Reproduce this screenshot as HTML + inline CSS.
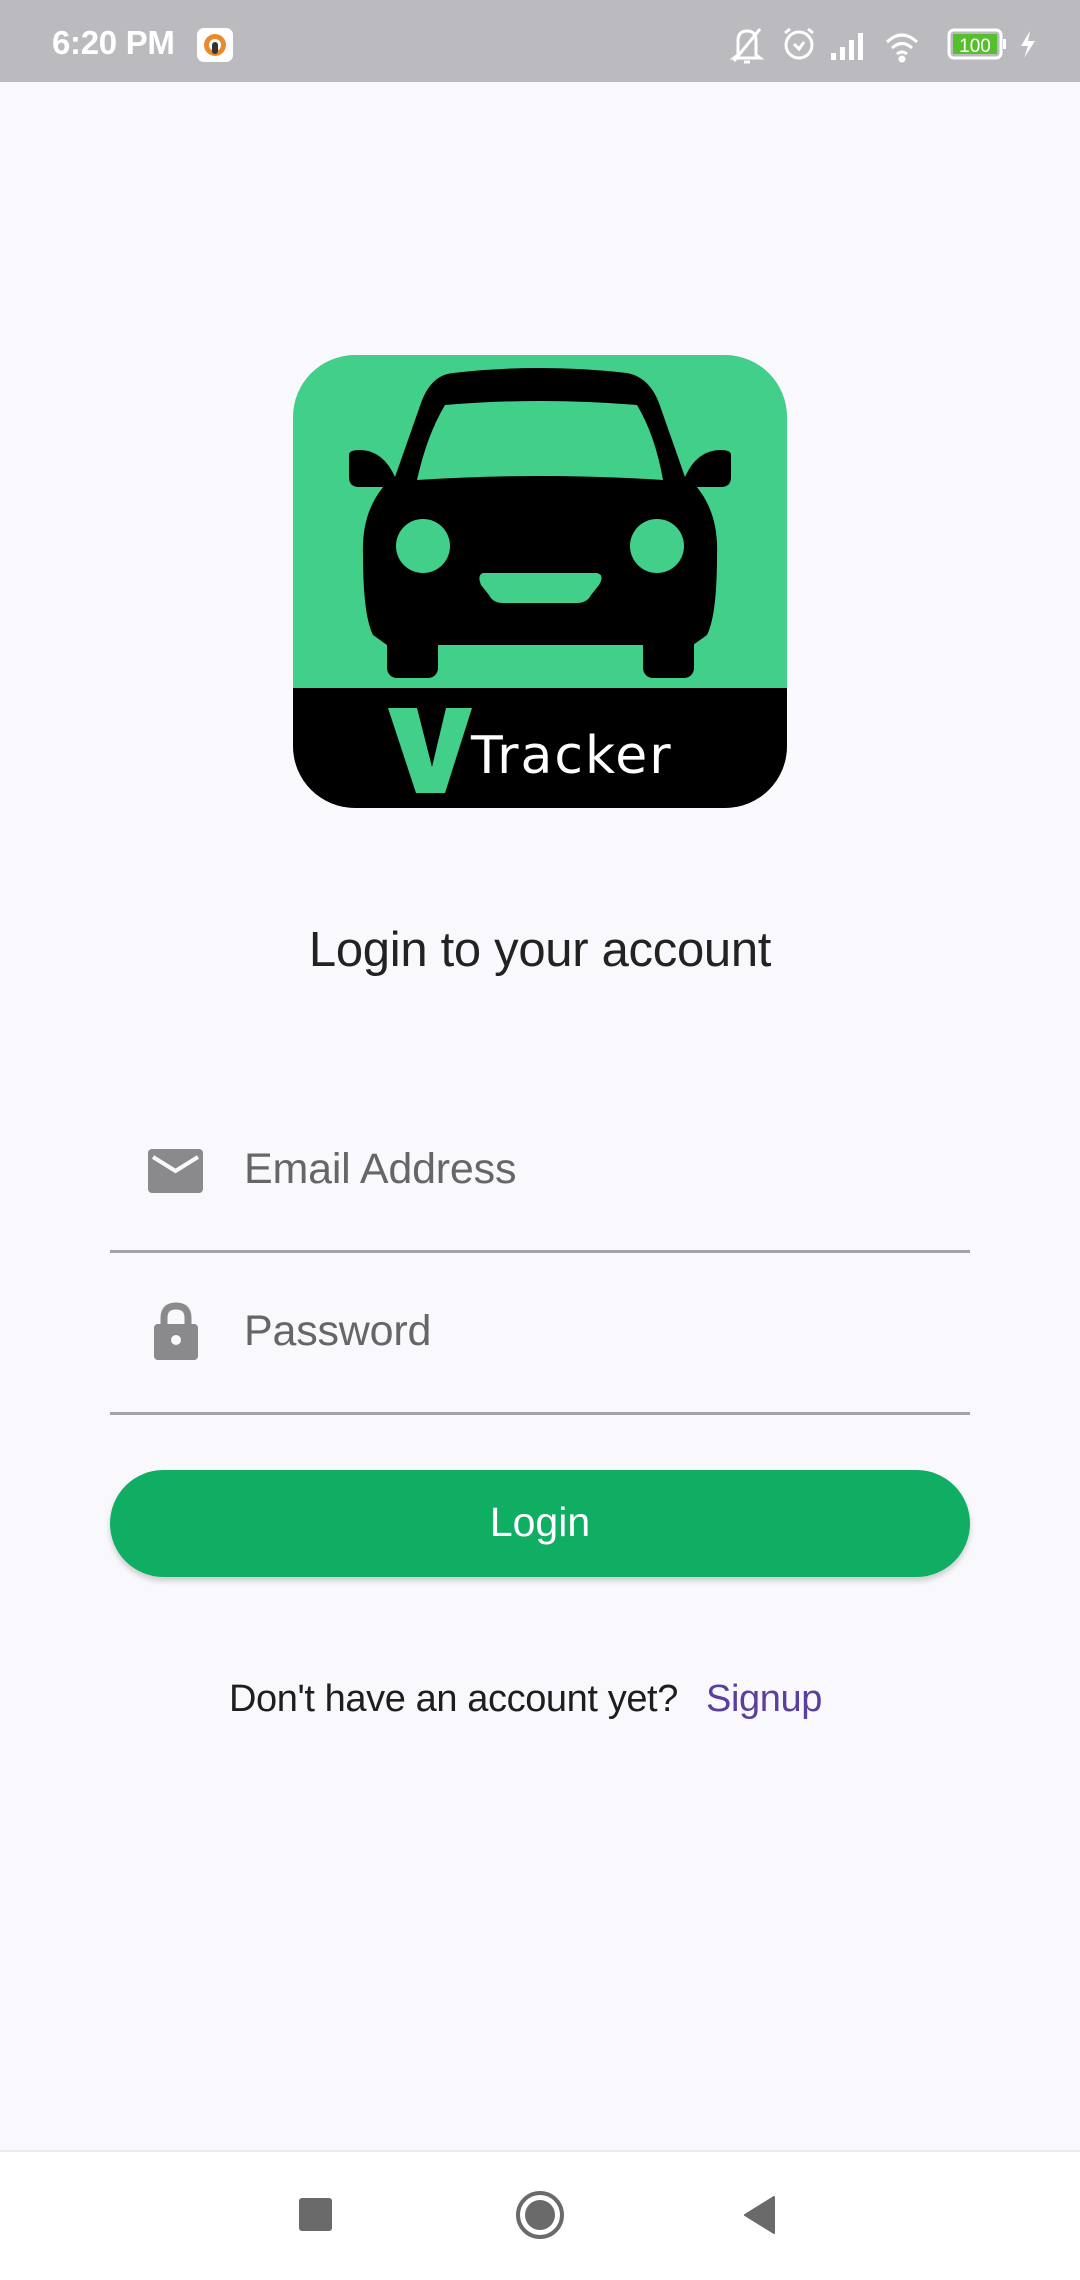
<!DOCTYPE html>
<html><head><meta charset="utf-8"><style>
*{margin:0;padding:0;box-sizing:border-box}
html,body{width:1080px;height:2280px;overflow:hidden;background:#f9f9fd;font-family:"Liberation Sans",sans-serif}
.abs{position:absolute}
.status{left:0;top:0;width:1080px;height:82px;background:#bbbbbf}
.time{left:52px;top:24px;color:#fff;font-weight:bold;font-size:33px;letter-spacing:-0.3px}
.title{left:0;width:1080px;top:922px;text-align:center;font-size:49px;color:#222;letter-spacing:-0.3px}
.lbl{left:244px;font-size:43px;color:#666;letter-spacing:-0.2px}
.line{left:110px;width:860px;height:3px;background:#a4a4a8}
.btn{left:110px;top:1470px;width:860px;height:107px;border-radius:54px;background:#0fae62;box-shadow:0 4px 6px rgba(0,0,0,0.18);color:#fff;font-size:41px;text-align:center;line-height:105px}
.foot{top:1678px;font-size:38px;letter-spacing:-0.4px}
.nav{left:0;top:2150px;width:1080px;height:130px;background:#fff;border-top:2px solid #ebebee}
</style></head><body>
<div class="abs status"></div>
<div class="abs time">6:20 PM</div>
<div class="abs" style="left:197px;top:28px;width:36px;height:34px;background:#fff;border-radius:7px">
 <div class="abs" style="left:7px;top:6px;width:22px;height:22px;border-radius:50%;background:#e88a2e"></div>
 <div class="abs" style="left:12px;top:11px;width:12px;height:12px;border-radius:50%;background:#fff"></div>
 <div class="abs" style="left:15px;top:14px;width:6px;height:12px;background:#333;border-radius:3px"></div>
</div>
<svg class="abs" style="left:730px;top:25px" width="320" height="40" viewBox="0 0 320 40" fill="none" stroke="#fff" stroke-width="3">
 <path d="M8 30 L8 16 Q8 6 17 6 Q26 6 26 16 L26 30 L30 33 L4 33 Z M14 37 L20 37"/>
 <path d="M4 36 L30 4"/>
 <circle cx="69" cy="20" r="13"/><path d="M64 19 L69 24 L74 17"/><path d="M55 8 L60 4 M83 8 L78 4"/>
 <g fill="#fff" stroke="none"><rect x="101" y="28" width="5" height="7"/><rect x="110" y="22" width="5" height="13"/><rect x="119" y="15" width="5" height="20"/><rect x="128" y="8" width="5" height="27"/></g>
 <path d="M157 17 Q172 3 187 17 M162 23 Q172 14 182 23 M167 29 Q172 25 177 29"/><circle cx="172" cy="34" r="2" fill="#fff"/>
 <rect x="219" y="5" width="52" height="28" rx="5"/><rect x="223" y="9" width="44" height="20" fill="#55c02c" stroke="none"/>
 <rect x="273" y="14" width="3" height="10" fill="#fff" stroke="none"/>
 <text x="245" y="27" fill="#fff" stroke="none" font-size="19" text-anchor="middle" font-family="Liberation Sans">100</text>
 <path d="M300 6 L291 21 L298 21 L294 33 L305 16 L298 16 Z" fill="#fff" stroke="none"/>
</svg>

<svg class="abs" style="left:293px;top:355px" width="494" height="453" viewBox="0 0 494 453">
 <defs><clipPath id="c"><rect width="494" height="453" rx="62"/></clipPath></defs>
 <g clip-path="url(#c)">
  <rect width="494" height="453" fill="#42cf8a"/>
  <rect y="333" width="494" height="120" fill="#000"/>
 </g>
 <g fill="#000">
  <path d="M102 122 L128 48 Q138 20 160 18 Q247 8 334 18 Q356 22 366 48 L392 122 Z"/>
  <path d="M56 100 Q56 95 66 95 Q90 95 102 122 L102 132 L66 132 Q56 132 56 122 Z"/>
  <path d="M438 100 Q438 95 428 95 Q404 95 392 122 L392 132 L428 132 Q438 132 438 122 Z"/>
  <path d="M100 122 Q247 113 394 122 Q426 150 424 200 Q424 260 414 280 L400 290 L94 290 L80 280 Q70 260 70 200 Q68 150 100 122 Z"/>
  <rect x="94" y="260" width="51" height="63" rx="10"/>
  <rect x="350" y="260" width="51" height="63" rx="10"/>
 </g>
 <path d="M152 50 Q247 42 344 50 Q362 80 370 125 Q247 117 124 125 Q134 80 152 50 Z" fill="#42cf8a"/>
 <circle cx="130" cy="191" r="27" fill="#42cf8a"/>
 <circle cx="364" cy="191" r="27" fill="#42cf8a"/>
 <path d="M190 218 L304 218 Q312 220 306 230 L298 240 Q294 248 284 248 L210 248 Q200 248 196 240 L188 230 Q184 220 190 218 Z" fill="#42cf8a"/>
 <path d="M95 353 L124 353 L139 412 L153 353 L179 353 L152 438 L123 438 Z" fill="#42cf8a"/>
 <text x="178" y="418" fill="#fff" font-size="52" font-family="DejaVu Sans,Liberation Sans,sans-serif" letter-spacing="2">Tracker</text>
</svg>

<div class="abs title">Login to your account</div>

<svg class="abs" style="left:148px;top:1149px" width="55" height="44" viewBox="0 0 55 44"><rect width="55" height="44" rx="4" fill="#8a8a8c"/><path d="M5 8 L27.5 22 L50 8" fill="none" stroke="#f9f9fd" stroke-width="4"/></svg>
<div class="abs lbl" style="top:1145px">Email Address</div>
<div class="abs line" style="top:1250px"></div>

<svg class="abs" style="left:154px;top:1302px" width="44" height="58" viewBox="0 0 44 58"><path d="M10 24 L10 16 Q10 4 22 4 Q34 4 34 16 L34 24" fill="none" stroke="#8a8a8c" stroke-width="7"/><rect x="0" y="22" width="44" height="36" rx="4" fill="#8a8a8c"/><circle cx="22" cy="38" r="5" fill="#f9f9fd"/></svg>
<div class="abs lbl" style="top:1307px">Password</div>
<div class="abs line" style="top:1412px"></div>

<div class="abs btn">Login</div>

<div class="abs foot" style="left:229px;color:#1e1e1e">Don't have an account yet?</div>
<div class="abs foot" style="left:706px;color:#5b3f9e">Signup</div>

<div class="abs nav"></div>
<div class="abs" style="left:299px;top:2198px;width:33px;height:33px;border-radius:3px;background:#6a6a6a"></div>
<div class="abs" style="left:516px;top:2191px;width:48px;height:48px;border-radius:50%;border:4px solid #6a6a6a;background:#fff"></div>
<div class="abs" style="left:525px;top:2200px;width:30px;height:30px;border-radius:50%;background:#6a6a6a"></div>
<svg class="abs" style="left:744px;top:2196px" width="32" height="38" viewBox="0 0 32 38"><path d="M30 1 L30 37 L1 19 Z" fill="#6a6a6a" stroke="#6a6a6a" stroke-width="2" stroke-linejoin="round"/></svg>
</body></html>
